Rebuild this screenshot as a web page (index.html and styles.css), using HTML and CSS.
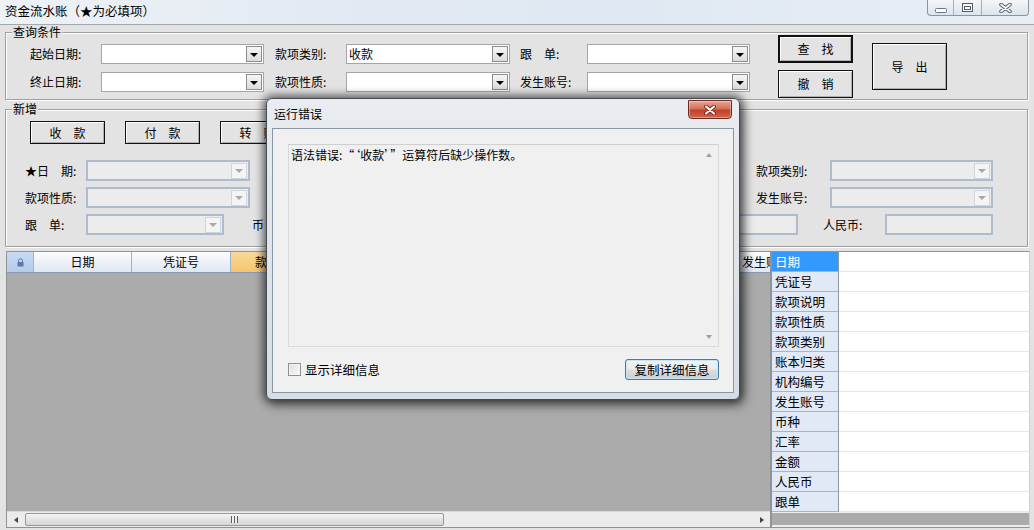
FILE: index.html
```html
<!DOCTYPE html>
<html lang="zh-CN">
<head>
    <meta charset="UTF-8">
    <meta name="viewport" content="width=device-width, initial-scale=1.0">
    <title>资金流水账</title>
    <link rel="stylesheet" href="styles.css">
</head>
<body>
    <div class="window">
        <div class="titlebar">
            <span class="title">资金流水账（★为必填项）</span>
            <div class="caption-buttons">
                <span class="cap-btn cap-min">
                    <svg width="12" height="5" viewBox="0 0 12 5"><rect x="0.5" y="0.5" width="11" height="4" rx="1" fill="#fafbfc" stroke="#6d7683"/></svg>
                </span>
                <span class="cap-btn cap-max">
                    <svg width="11" height="9" viewBox="0 0 11 9"><rect x="0.5" y="0.5" width="10" height="8" fill="#fafbfc" stroke="#535b66"/><rect x="2.5" y="3.5" width="6" height="3" fill="none" stroke="#535b66"/></svg>
                </span>
                <span class="cap-btn cap-close">
                    <svg width="13" height="10" viewBox="0 0 13 10"><path d="M2 1.5l9 7M11 1.5l-9 7" stroke="#5a6470" stroke-width="3.6" stroke-linecap="round"/><path d="M2 1.5l9 7M11 1.5l-9 7" stroke="#f7f8fa" stroke-width="1.6" stroke-linecap="round"/></svg>
                </span>
            </div>
        </div>

        <div class="client">
            <div class="group query">
                <span class="group-title">查询条件</span>
                <div class="query-fields">
                    <div class="field-row">
                        <span class="lbl w71">起始日期:</span>
                        <div class="combo w163"><span class="combo-text"></span><span class="combo-btn"></span></div>
                        <span class="lbl w71 ml11">款项类别:</span>
                        <div class="combo w164"><span class="combo-text">收款</span><span class="combo-btn"></span></div>
                        <span class="lbl w67 ml10">跟　单:</span>
                        <div class="combo w163"><span class="combo-text"></span><span class="combo-btn"></span></div>
                    </div>
                    <div class="field-row">
                        <span class="lbl w71">终止日期:</span>
                        <div class="combo w163"><span class="combo-text"></span><span class="combo-btn"></span></div>
                        <span class="lbl w71 ml11">款项性质:</span>
                        <div class="combo w164"><span class="combo-text"></span><span class="combo-btn"></span></div>
                        <span class="lbl w67 ml10">发生账号:</span>
                        <div class="combo w163"><span class="combo-text"></span><span class="combo-btn"></span></div>
                    </div>
                </div>
                <div class="query-buttons">
                    <button class="btn btn-default btn-query">查　找</button>
                    <button class="btn btn-query">撤　销</button>
                </div>
                <button class="btn btn-export">导　出</button>
            </div>

            <div class="group newgroup">
                <span class="group-title">新增</span>
                <div class="new-buttons">
                    <button class="btn btn-new">收　款</button>
                    <button class="btn btn-new">付　款</button>
                    <button class="btn btn-new">转　账</button>
                </div>
                <div class="new-fields">
                    <div class="field-row tall">
                        <span class="lbl w61">★日　期:</span>
                        <div class="combo disabled w164"><span class="combo-text"></span><span class="combo-btn"></span></div>
                        <span class="lbl w60 ml20">凭证号:</span>
                        <div class="textbox disabled w150"></div>
                        <span class="lbl w74 ml276">款项类别:</span>
                        <div class="combo disabled w163"><span class="combo-text"></span><span class="combo-btn"></span></div>
                    </div>
                    <div class="field-row tall">
                        <span class="lbl w61">款项性质:</span>
                        <div class="combo disabled w164"><span class="combo-text"></span><span class="combo-btn"></span></div>
                        <span class="lbl w60 ml20">款项说明:</span>
                        <div class="textbox disabled w150"></div>
                        <span class="lbl w74 ml276">发生账号:</span>
                        <div class="combo disabled w163"><span class="combo-text"></span><span class="combo-btn"></span></div>
                    </div>
                    <div class="field-row tall">
                        <span class="lbl w61">跟　单:</span>
                        <div class="combo disabled w138"><span class="combo-text"></span><span class="combo-btn"></span></div>
                        <span class="lbl w56 ml28">币　种:</span>
                        <div class="combo disabled w132"><span class="combo-text"></span><span class="combo-btn"></span></div>
                        <span class="lbl w56 ml18">汇　率:</span>
                        <div class="textbox disabled w86"></div>
                        <span class="lbl w56 ml20">金　额:</span>
                        <div class="textbox disabled w122"></div>
                        <span class="lbl w62 ml25">人民币:</span>
                        <div class="textbox disabled w108"></div>
                    </div>
                </div>
            </div>

            <div class="data">
                <div class="grid">
                    <div class="grid-header">
                        <span class="hcell hcell-lock">
                            <svg width="7" height="9" viewBox="0 0 7 9"><path d="M1.5 4.5V2.8a2 2 0 0 1 4 0v1.7" fill="none" stroke="#5d78a8"/><rect x="0.5" y="4" width="6" height="4.5" fill="#5d78a8"/></svg>
                        </span>
                        <span class="hcell w98">日期</span>
                        <span class="hcell w99">凭证号</span>
                        <span class="hcell hcell-active w97">款项说明</span>
                        <span class="hcell w97">款项性质</span>
                        <span class="hcell w97">款项类别</span>
                        <span class="hcell w97">账本归类</span>
                        <span class="hcell w97">机构编号</span>
                        <span class="hcell hcell-last">发生账号</span>
                    </div>
                    <div class="grid-body"></div>
                    <div class="hscroll">
                        <span class="arrow arrow-left"></span>
                        <div class="hscroll-track">
                            <div class="hscroll-thumb"><span class="grip"></span></div>
                        </div>
                        <span class="arrow arrow-right"></span>
                    </div>
                </div>

                <div class="props">
                    <div class="prop-row selected"><span class="prop-name">日期</span><span class="prop-value"></span></div>
                    <div class="prop-row"><span class="prop-name">凭证号</span><span class="prop-value"></span></div>
                    <div class="prop-row"><span class="prop-name">款项说明</span><span class="prop-value"></span></div>
                    <div class="prop-row"><span class="prop-name">款项性质</span><span class="prop-value"></span></div>
                    <div class="prop-row"><span class="prop-name">款项类别</span><span class="prop-value"></span></div>
                    <div class="prop-row"><span class="prop-name">账本归类</span><span class="prop-value"></span></div>
                    <div class="prop-row"><span class="prop-name">机构编号</span><span class="prop-value"></span></div>
                    <div class="prop-row"><span class="prop-name">发生账号</span><span class="prop-value"></span></div>
                    <div class="prop-row"><span class="prop-name">币种</span><span class="prop-value"></span></div>
                    <div class="prop-row"><span class="prop-name">汇率</span><span class="prop-value"></span></div>
                    <div class="prop-row"><span class="prop-name">金额</span><span class="prop-value"></span></div>
                    <div class="prop-row"><span class="prop-name">人民币</span><span class="prop-value"></span></div>
                    <div class="prop-row"><span class="prop-name">跟单</span><span class="prop-value"></span></div>
                    <div class="props-footer"></div>
                </div>
            </div>
        </div>

        <!-- error dialog sits on top of the form -->
        <div class="dialog">
            <div class="dlg-title">
                <span>运行错误</span>
                <span class="dlg-close">
                    <svg width="12" height="10" viewBox="0 0 12 10"><path d="M2 1.5l8 7M10 1.5l-8 7" stroke="#7a2a1e" stroke-width="3.8" stroke-linecap="round"/><path d="M2 1.5l8 7M10 1.5l-8 7" stroke="#fff" stroke-width="2" stroke-linecap="round"/></svg>
                </span>
            </div>
            <div class="dlg-body">
                <div class="dlg-message">
                    <p>语法错误:“‘收款’”运算符后缺少操作数。</p>
                    <div class="dlg-scroll">
                        <span class="tri tri-up"></span>
                        <span class="tri tri-down"></span>
                    </div>
                </div>
                <div class="dlg-footer">
                    <label class="check"><span class="checkbox"></span>显示详细信息</label>
                    <button class="copy-btn">复制详细信息</button>
                </div>
            </div>
        </div>
    </div>
</body>
</html>
```

FILE: styles.css
```css
:root {
    --window-bg: #e3e3e3;
    --group-line: #a0a0a0;
    --grid-grey: #ababab;
    --header-line: #9eb1c9;
    --select-blue: #3399ff;
}

* {
    margin: 0;
    padding: 0;
    box-sizing: border-box;
}

body {
    width: 1034px;
    height: 530px;
    overflow: hidden;
    font-family: "Noto Sans CJK SC", "Noto Sans", sans-serif;
    font-size: 12px;
    color: #000;
    background-color: var(--window-bg);
}

button {
    font: inherit;
    color: inherit;
}

.window {
    position: relative;
    height: 530px;
    display: flex;
    flex-direction: column;
}

/* title bar */
.titlebar {
    height: 25px;
    display: flex;
    justify-content: space-between;
    align-items: flex-start;
    background: linear-gradient(90deg, #eef2f6 0%, #e2e9f2 35%, #dfe8f2 60%, #e9eef4 100%);
    border-bottom: 1px solid #a3a9b0;
}

.title {
    padding-left: 5px;
    line-height: 21px;
    font-size: 12.5px;
}

.caption-buttons {
    display: flex;
    margin-right: 5px;
    height: 16px;
    border: 1px solid #8a95a3;
    border-top: none;
    border-radius: 0 0 4px 4px;
    background: linear-gradient(#f4f6f9, #dde3ea);
    overflow: hidden;
}

.cap-btn {
    display: flex;
    align-items: center;
    justify-content: center;
    height: 100%;
}

.cap-min {
    width: 26px;
    padding-top: 5px;
    border-right: 1px solid #a6afba;
}

.cap-max {
    width: 28px;
    border-right: 1px solid #a6afba;
}

.cap-close {
    width: 46px;
}

/* client area */
.client {
    flex: 1;
    display: flex;
    flex-direction: column;
    padding: 0 4px 2px 5px;
}

.group {
    position: relative;
    margin-right: 2px;
    border: 1px solid var(--group-line);
    box-shadow: inset 1px 1px 0 #fff, 1px 1px 0 #fff;
}

.group-title {
    position: absolute;
    left: 6px;
    top: -8px;
    padding: 0 1px;
    line-height: 14px;
    background-color: var(--window-bg);
}

.query {
    margin-top: 7px;
    height: 68px;
    display: flex;
    align-items: flex-start;
    padding: 2px 0 0 24px;
}

.query-fields {
    margin-top: 9px;
    display: flex;
    flex-direction: column;
    gap: 8px;
}

.field-row {
    display: flex;
    align-items: center;
    height: 20px;
}

.field-row.tall {
    height: 21px;
}

.lbl {
    flex-shrink: 0;
    white-space: nowrap;
    line-height: 14px;
}

.w56 { width: 56px; }
.w60 { width: 60px; }
.w61 { width: 61px; }
.w62 { width: 62px; }
.w67 { width: 67px; }
.w71 { width: 71px; }
.w74 { width: 74px; }
.w86 { width: 86px; }
.w97 { width: 97px; }
.w98 { width: 98px; }
.w99 { width: 99px; }
.w108 { width: 108px; }
.w122 { width: 122px; }
.w132 { width: 132px; }
.w138 { width: 138px; }
.w150 { width: 150px; }
.w163 { width: 163px; }
.w164 { width: 164px; }

.ml10 { margin-left: 10px; }
.ml11 { margin-left: 11px; }
.ml18 { margin-left: 18px; }
.ml20 { margin-left: 20px; }
.ml25 { margin-left: 25px; }
.ml28 { margin-left: 28px; }
.ml276 { margin-left: 276px; }

.combo {
    flex-shrink: 0;
    display: flex;
    align-items: center;
    justify-content: space-between;
    height: 100%;
    background-color: #fff;
    border: 1px solid #a5a5a5;
    padding: 0 1px 0 2px;
}

.combo-text {
    line-height: 14px;
}

.combo-btn {
    width: 16px;
    height: 16px;
    display: flex;
    align-items: center;
    justify-content: center;
    border: 1px solid #8d8d8d;
    background: linear-gradient(#f6f6f6, #dcdcdc);
}

.combo-btn::after {
    content: "";
    border-left: 4px solid transparent;
    border-right: 4px solid transparent;
    border-top: 4px solid #000;
    margin-top: 1px;
}

.combo.disabled,
.textbox.disabled {
    background-color: #ececec;
    border: 2px solid #aebbcd;
}

.combo.disabled .combo-btn {
    border-color: #d0d6de;
    background: #f4f4f4;
}

.combo.disabled .combo-btn::after {
    border-top-color: #a8a8a8;
}

.textbox {
    flex-shrink: 0;
    height: 100%;
}

/* push buttons */
.btn {
    flex-shrink: 0;
    background-color: var(--window-bg);
    border: 1px solid #111;
    box-shadow: inset 1px 1px 0 #fff, inset -1px -1px 0 #b0b0b0;
    line-height: 14px;
}

.btn-default {
    border-width: 2px;
}

.query-buttons {
    margin-left: 28px;
    display: flex;
    flex-direction: column;
    gap: 7px;
}

.btn-query {
    width: 75px;
    height: 28px;
}

.btn-export {
    margin: 8px 0 0 19px;
    width: 75px;
    height: 47px;
}

.newgroup {
    margin-top: 9px;
    height: 138px;
    padding: 11px 0 0 19px;
}

.new-buttons {
    display: flex;
    gap: 20px;
    margin-left: 5px;
}

.btn-new {
    width: 75px;
    height: 23px;
}

.new-fields {
    margin-top: 16px;
    display: flex;
    flex-direction: column;
    gap: 6px;
}

/* data grid + property list */
.data {
    margin: 4px 0 0 1px;
    flex: 1;
    display: flex;
    min-height: 0;
}

.grid {
    width: 765px;
    display: flex;
    flex-direction: column;
    border: 1px solid #8e9399;
    background-color: var(--grid-grey);
    overflow: hidden;
}

.grid-header {
    display: flex;
    height: 21px;
    flex-shrink: 0;
    border-bottom: 1px solid #8a9bb3;
}

.hcell {
    flex-shrink: 0;
    display: flex;
    align-items: center;
    justify-content: center;
    white-space: nowrap;
    background: linear-gradient(#fbfcfe, #dfe7f2);
    border-right: 1px solid var(--header-line);
    line-height: 14px;
}

.hcell-lock {
    width: 27px;
    background: linear-gradient(#c9dbf2, #b5cbe9);
}

.hcell-active {
    background: linear-gradient(#f9d99c, #f5c56e);
}

.hcell-last {
    flex: 1;
    justify-content: flex-start;
    padding-left: 26px;
    border-right: none;
    overflow: hidden;
}

.grid-body {
    flex: 1;
}

.hscroll {
    height: 16px;
    flex-shrink: 0;
    display: flex;
    align-items: center;
    background-color: #ececec;
    border-top: 1px solid #dadada;
}

.arrow {
    width: 17px;
    height: 100%;
    display: flex;
    align-items: center;
    justify-content: center;
}

.arrow-left::after {
    content: "";
    border-top: 3.5px solid transparent;
    border-bottom: 3.5px solid transparent;
    border-right: 4px solid #444;
}

.arrow-right::after {
    content: "";
    border-top: 3.5px solid transparent;
    border-bottom: 3.5px solid transparent;
    border-left: 4px solid #444;
}

.hscroll-track {
    flex: 1;
    height: 100%;
    padding: 1px 0;
}

.hscroll-thumb {
    width: 419px;
    height: 100%;
    margin-left: 1px;
    display: flex;
    align-items: center;
    justify-content: center;
    border: 1px solid #979797;
    border-radius: 2px;
    background: linear-gradient(#f5f5f5, #e4e4e4 50%, #d6d6d6);
}

.grip {
    width: 7px;
    height: 7px;
    background: repeating-linear-gradient(90deg, #5c5c5c 0 1px, #f0f0f0 1px 3px);
}

.props {
    flex: 1;
    display: flex;
    flex-direction: column;
    border: 1px solid #8e9399;
    border-right-color: #d0d0d0;
    background-color: #ededed;
}

.prop-row {
    display: flex;
    height: 20px;
    flex-shrink: 0;
}

.prop-name {
    width: 67px;
    padding-left: 3px;
    line-height: 19px;
    font-size: 12.5px;
    background-color: #e0e9f5;
    border-bottom: 1px solid #a6b6c8;
    border-right: 1px solid #8c99a8;
}

.prop-value {
    flex: 1;
    background-color: #fff;
    border-bottom: 1px solid #e6e6e6;
}

.prop-row.selected .prop-name {
    background-color: var(--select-blue);
    color: #fff;
}

.props-footer {
    height: 12px;
    margin-top: 1px;
    background-color: var(--grid-grey);
}

/* error dialog */
.dialog {
    position: absolute;
    left: 266px;
    top: 98px;
    width: 474px;
    height: 302px;
    display: flex;
    flex-direction: column;
    border: 1px solid #474c53;
    border-radius: 6px;
    background: linear-gradient(#e9ecf0, #d7dde4);
    box-shadow: 0 0 9px 3px rgba(0, 0, 0, 0.55), 4px 5px 12px rgba(0, 0, 0, 0.35);
}

.dlg-title {
    height: 29px;
    flex-shrink: 0;
    display: flex;
    justify-content: space-between;
    align-items: flex-start;
    padding: 0 7px 0 7px;
}

.dlg-title span:first-child {
    margin-top: 7px;
    line-height: 16px;
}

.dlg-close {
    width: 44px;
    height: 19px;
    margin-top: 1px;
    display: flex;
    align-items: center;
    justify-content: center;
    border: 1px solid #6b2a22;
    border-radius: 0 0 4px 4px;
    background: linear-gradient(#e8a796, #d4705c 45%, #c2412a 55%, #d0664c);
    box-shadow: inset 0 0 0 1px rgba(255, 255, 255, 0.35);
}

.dlg-body {
    flex: 1;
    margin: 0 5px 6px;
    padding: 15px 14px 0 15px;
    border: 1px solid #8a96a6;
    background-color: #f0f0f0;
}

.dlg-message {
    height: 203px;
    display: flex;
    justify-content: space-between;
    border: 1px solid #dadada;
    border-top-color: #cfcfcf;
    background-color: #f0f0f0;
}

.dlg-message p {
    padding: 3px 0 0 2px;
    line-height: 14px;
}

.dlg-scroll {
    width: 16px;
    display: flex;
    flex-direction: column;
    justify-content: space-between;
    align-items: center;
    padding: 8px 0 7px;
    margin-right: 1px;
}

.tri {
    border-left: 3.5px solid transparent;
    border-right: 3.5px solid transparent;
}

.tri-up {
    border-bottom: 4px solid #a0a0a0;
}

.tri-down {
    border-top: 4px solid #a0a0a0;
}

.dlg-footer {
    margin-top: 12px;
    display: flex;
    justify-content: space-between;
    align-items: center;
    height: 21px;
}

.check {
    display: flex;
    align-items: center;
    gap: 4px;
    font-size: 12.5px;
}

.checkbox {
    width: 13px;
    height: 13px;
    border: 1px solid #8e8f8f;
    background: linear-gradient(135deg, #dcdcdc, #fbfbfb);
    box-shadow: inset 0 0 0 1px #f4f4f4;
}

.copy-btn {
    width: 94px;
    height: 21px;
    border: 1px solid #3c7fb1;
    border-radius: 3px;
    background: linear-gradient(#f2f2f2 0%, #ebebeb 48%, #dddddd 52%, #cfcfcf 100%);
    box-shadow: inset 0 0 0 1px #c4e5f6;
    font-size: 12.5px;
    line-height: 14px;
}
```
